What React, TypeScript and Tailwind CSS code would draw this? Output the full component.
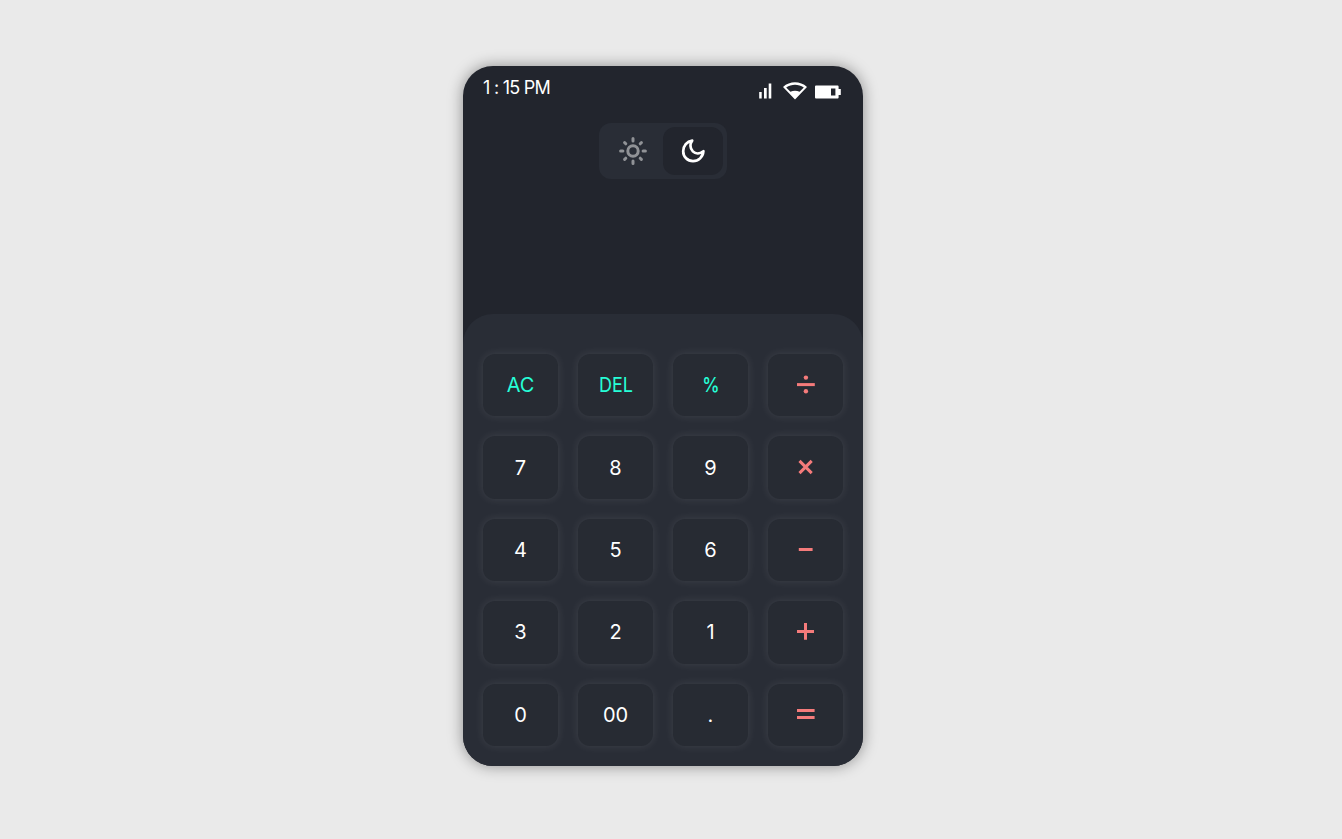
import React from "react";

type Tone = "number" | "function" | "operator";
type Key = { name: string; tone: Tone; label?: string; path?: string };

const keys: Key[] = [
  { name: "clear", tone: "function", label: "AC" },
  { name: "delete", tone: "function", label: "DEL" },
  { name: "percent", tone: "function", label: "%" },
  { name: "divide", tone: "operator", path: "M3 11.6H20.8" },
  { name: "7", tone: "number", label: "7" },
  { name: "8", tone: "number", label: "8" },
  { name: "9", tone: "number", label: "9" },
  { name: "multiply", tone: "operator", path: "M5.5 4.9L17.7 17.1M17.7 4.9L5.5 17.1" },
  { name: "4", tone: "number", label: "4" },
  { name: "5", tone: "number", label: "5" },
  { name: "6", tone: "number", label: "6" },
  { name: "minus", tone: "operator", path: "M4.8 11.4H18.6" },
  { name: "3", tone: "number", label: "3" },
  { name: "2", tone: "number", label: "2" },
  { name: "1", tone: "number", label: "1" },
  { name: "plus", tone: "operator", path: "M3 11.4H20M11.5 3V19.8" },
  { name: "0", tone: "number", label: "0" },
  { name: "00", tone: "number", label: "00" },
  { name: "point", tone: "number", label: "." },
  { name: "equals", tone: "operator", path: "M3 7.6H20.6M3 14.6H20.6" },
];

const tones: Record<Tone, string> = {
  number: "text-white",
  function: "text-[#26fed7]",
  operator: "text-[#f57b7b]",
};

function Glyph({ item }: { item: Key }) {
  if (item.name === "percent") {
    return <span className="inline-block scale-x-[0.87] scale-y-[0.97] font-medium">%</span>;
  }
  if (item.name === "delete") {
    return <span className="inline-block scale-x-[0.9]">DEL</span>;
  }
  if (item.path) {
    return (
      <svg viewBox="0 0 24 24" className="size-6" fill="none" stroke="currentColor" strokeWidth="3" aria-hidden="true">
        <path d={item.path} />
        {item.name === "divide" && (
          <>
            <circle cx="11.9" cy="4.6" r="2.2" fill="currentColor" stroke="none" />
            <circle cx="11.9" cy="18.2" r="2.2" fill="currentColor" stroke="none" />
          </>
        )}
      </svg>
    );
  }
  return <>{item.label}</>;
}

function Sun() {
  return (
    <svg viewBox="0 0 28 28" className="size-7" fill="none" stroke="currentColor" strokeWidth="3" strokeLinecap="round">
      <circle cx="14" cy="14" r="5.2" />
      <path d="M14 1.6V3.9M14 24.1V26.4M1.6 14H3.9M24.1 14H26.4M5.6 5.6L6.8 6.8M21.2 21.2L22.4 22.4M5.6 22.4L6.8 21.2M21.2 6.8L22.4 5.6" />
    </svg>
  );
}

function Moon() {
  return (
    <svg viewBox="0 0 28 28" className="size-7" fill="none" stroke="currentColor" strokeWidth="2.7" strokeLinejoin="round">
      <path d="M13.2 3.6C10.8 6.6 10.8 11.4 13.8 14.4C16.8 17.3 21.3 16.6 24.4 14.2C24 20 19.5 24.2 14 24.2C8.5 24.2 4.2 19.8 4.2 14.3C4.2 8.9 8 4.3 13.2 3.6Z" />
    </svg>
  );
}

function Signal() {
  return (
    <svg viewBox="0 0 14 24" className="h-6 w-3.5" fill="currentColor">
      <path d="M.2 12H2.7v6.4H.2zM5 8h2.7v10.4H5zM9.7 3.4h2.6v15H9.7z" />
    </svg>
  );
}

function Wifi() {
  return (
    <svg viewBox="0 0 24 24" className="ml-2.5 size-6" fill="currentColor">
      <path fillRule="evenodd" d="M0 7C6.9.8 17.1.8 24 7L12 19.6ZM3.2 7.5L7.4 11.8Q12 9.5 16.6 11.8L20.8 7.5C15.4 3.7 8.6 3.7 3.2 7.5Z" />
    </svg>
  );
}

function Battery() {
  return (
    <svg viewBox="0 0 26 24" className="ml-2 h-6 w-[26px]" fill="currentColor">
      <path fillRule="evenodd" d="M1 5.5h21.6q1 0 1 1V9h2.2v6h-2.2v2.5q0 1-1 1H1q-1 0-1-1v-11q0-1 1-1zM16 8.4v7.2h4.4V8.4z" />
    </svg>
  );
}

export default function App() {
  return (
    <main className="flex h-screen items-center justify-center bg-[#eaeaea] pr-4 pb-[7px] font-[Inter,sans-serif]">
      <div className="flex h-[700px] w-[400px] flex-col overflow-hidden rounded-[30px] bg-[#22252d] shadow-[0_0_15px_rgba(0,0,0,0.4)]">
        <header className="flex h-[57px] justify-between pr-[22px] pl-5 text-white">
          <time className="pt-2 text-[18px] leading-[27px] tracking-[-0.75px]">1 : 15 PM</time>
          <div className="flex pt-[14px]">
            <Signal />
            <Wifi />
            <Battery />
          </div>
        </header>
        <div className="flex h-14 w-32 self-center rounded-xl bg-[#292d36] p-1">
          <button aria-label="Light mode" className="flex flex-1 items-center justify-center text-[#909296]"><Sun /></button>
          <button aria-label="Dark mode" className="flex flex-1 items-center justify-center rounded-xl bg-[#22252d] text-white"><Moon /></button>
        </div>
        <section className="mt-auto grid h-[452px] grid-cols-4 grid-rows-5 gap-5 rounded-t-[30px] bg-[#292d36] px-5 pt-10 pb-5">
          {keys.map((item) => (
            <button key={item.name} aria-label={item.name} className={`flex items-center justify-center rounded-[12px] bg-[#272b33] text-[20px] leading-[30px] shadow-[0_0_10px_rgba(255,255,255,0.1)] ${tones[item.tone]}`}>
              <Glyph item={item} />
            </button>
          ))}
        </section>
      </div>
    </main>
  );
}
